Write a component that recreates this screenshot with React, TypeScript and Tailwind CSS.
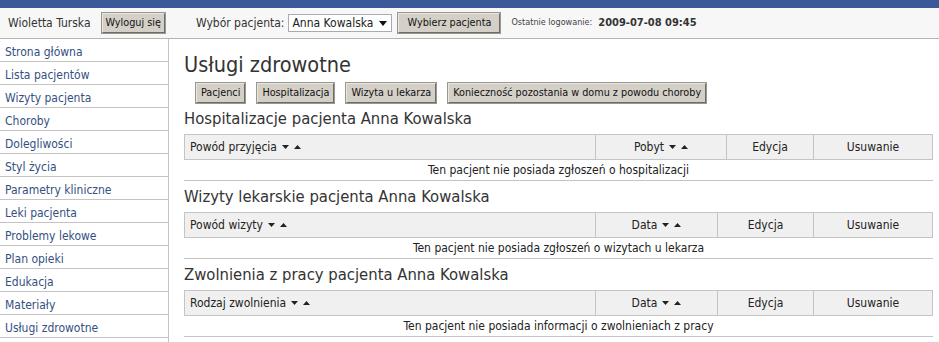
import React from "react";

const menu = [
  "Strona główna",
  "Lista pacjentów",
  "Wizyty pacjenta",
  "Choroby",
  "Dolegliwości",
  "Styl życia",
  "Parametry kliniczne",
  "Leki pacjenta",
  "Problemy lekowe",
  "Plan opieki",
  "Edukacja",
  "Materiały",
  "Usługi zdrowotne",
];

const btn =
  "h-[20px] px-[4px] bg-[#d4d0c8] border border-t-[#e8e6e1] border-l-[#e8e6e1] border-r-[#6f6c66] border-b-[#6f6c66] outline outline-1 outline-[#9a978f] text-[10.75px] text-[#111] leading-none whitespace-nowrap";

function Sort() {
  return (
    <span className="inline-flex items-center gap-[5px] ml-[5px]">
      <svg width="7" height="4" viewBox="0 0 7 4">
        <path d="M0 0h7L3.5 4z" fill="#222" />
      </svg>
      <svg width="7" height="4" viewBox="0 0 7 4">
        <path d="M0 4h7L3.5 0z" fill="#222" />
      </svg>
    </span>
  );
}

type Section = {
  title: string;
  first: string;
  second: string;
  w2: string;
  w3: string;
  empty: string;
};

const sections: Section[] = [
  {
    title: "Hospitalizacje pacjenta Anna Kowalska",
    first: "Powód przyjęcia",
    second: "Pobyt",
    w2: "w-[131px]",
    w3: "w-[87px]",
    empty: "Ten pacjent nie posiada zgłoszeń o hospitalizacji",
  },
  {
    title: "Wizyty lekarskie pacjenta Anna Kowalska",
    first: "Powód wizyty",
    second: "Data",
    w2: "w-[122px]",
    w3: "w-[96px]",
    empty: "Ten pacjent nie posiada zgłoszeń o wizytach u lekarza",
  },
  {
    title: "Zwolnienia z pracy pacjenta Anna Kowalska",
    first: "Rodzaj zwolnienia",
    second: "Data",
    w2: "w-[122px]",
    w3: "w-[96px]",
    empty: "Ten pacjent nie posiada informacji o zwolnieniach z pracy",
  },
];

function DataTable({ s }: { s: Section }) {
  const cell = "flex items-center justify-center border-l border-[#c4c4c4]";
  return (
    <div className="w-[749px] text-[12px] text-[#222]">
      <div className="flex h-[26px] border border-[#c4c4c4] bg-[#f0f0f0]">
        <div className="w-[410px] flex items-center pl-[5px]">
          {s.first}
          <Sort />
        </div>
        <div className={`${cell} ${s.w2}`}>
          {s.second}
          <Sort />
        </div>
        <div className={`${cell} ${s.w3}`}>Edycja</div>
        <div className={`${cell} flex-1`}>Usuwanie</div>
      </div>
      <div className="h-[21px] border-b border-[#c4c4c4] flex items-center justify-center">{s.empty}</div>
    </div>
  );
}

export default function App() {
  return (
    <div
      className="w-[939px] h-[342px] overflow-hidden bg-white text-[#222]"
      style={{ fontFamily: "Tahoma, 'DejaVu Sans Condensed', 'DejaVu Sans', sans-serif", fontStretch: "condensed" }}
    >
      <div className="h-[8px] bg-[#3b5998]" />
      <header className="h-[31px] bg-[#f7f7f7] border-b border-[#b4b4b4] flex items-center pl-[8px] text-[12px]">
        <span className="text-[#333]">Wioletta Turska</span>
        <button className={`${btn} ml-[11px] !px-[3px]`}>Wyloguj się</button>
        <span className="ml-[31px] text-[#333]">Wybór pacjenta:</span>
        <div className="ml-[4px] w-[104px] h-[18px] bg-white border border-[#a5acb2] flex items-center justify-between pl-[3px] pr-[4px] text-[12px]">
          <span>Anna Kowalska</span>
          <svg width="8" height="5" viewBox="0 0 8 5">
            <path d="M0 0h8L4 5z" fill="#111" />
          </svg>
        </div>
        <button className={`${btn} ml-[6px] w-[102px]`}>Wybierz pacjenta</button>
        <span className="ml-[11px] text-[9px] text-[#444]">Ostatnie logowanie:</span>
        <span className="ml-[6px] text-[11px] font-bold text-[#333]">2009-07-08 09:45</span>
      </header>
      <div className="flex">
        <nav className="w-[169px] shrink-0 border-r border-[#c4c4c4] h-[303px]">
          {menu.map((m) => (
            <div
              key={m}
              className="h-[23px] border-b border-[#c4c4c4] pl-[5px] pt-[3px] flex items-center text-[12px] text-[#34507f]"
            >
              {m}
            </div>
          ))}
        </nav>
        <main className="pl-[15px] pt-[12px]">
          <h1 className="text-[21.5px] leading-[28px] text-[#333]">Usługi zdrowotne</h1>
          <div className="flex gap-[12px] ml-[12px] mt-[4px] mb-[5px]">
            <button className={btn}>Pacjenci</button>
            <button className={btn}>Hospitalizacja</button>
            <button className={btn}>Wizyta u lekarza</button>
            <button className={btn}>Konieczność pozostania w domu z powodu choroby</button>
          </div>
          {sections.map((s) => (
            <section key={s.title}>
              <h2 className="text-[16.5px] leading-[22px] text-[#333] mt-[5px] mb-[4px]">{s.title}</h2>
              <DataTable s={s} />
            </section>
          ))}
        </main>
      </div>
    </div>
  );
}
